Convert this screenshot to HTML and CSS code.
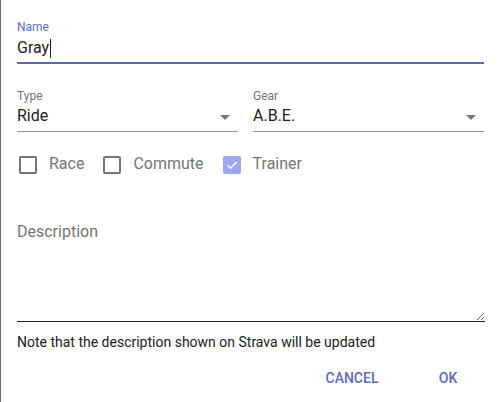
FILE: index.html
```html
<!DOCTYPE html>
<html lang="en">
<head>
<meta charset="utf-8">
<title>Edit activity</title>
<link rel="stylesheet" href="styles.css">
</head>
<body>
<div class="dialog">
  <div class="content">
    <div class="field name-field">
      <div class="label label-active">Name</div>
      <div class="input-line"><span class="value">Gray</span><span class="caret"></span></div>
    </div>

    <div class="selects">
      <div class="field select-field">
        <div class="label">Type</div>
        <div class="select-line">
          <span class="value">Ride</span>
          <svg class="arrow" width="10" height="5" viewBox="0 0 10 5"><path d="M0 0l5 5 5-5z"/></svg>
        </div>
      </div>
      <div class="field select-field">
        <div class="label">Gear</div>
        <div class="select-line">
          <span class="value">A.B.E.</span>
          <svg class="arrow" width="10" height="5" viewBox="0 0 10 5"><path d="M0 0l5 5 5-5z"/></svg>
        </div>
      </div>
    </div>

    <div class="checks">
      <label class="check"><span class="box"></span><span class="check-label">Race</span></label>
      <label class="check"><span class="box"></span><span class="check-label">Commute</span></label>
      <label class="check"><span class="box box-on"><svg width="14" height="14" viewBox="0 0 24 24"><path d="M4.5 12.5l5 5L20 7" fill="none" stroke="#fff" stroke-width="2.6"/></svg></span><span class="check-label">Trainer</span></label>
    </div>

    <textarea class="description" placeholder="Description"></textarea>

    <p class="note">Note that the description shown on Strava will be updated</p>
  </div>
  <div class="actions">
    <button class="btn">CANCEL</button>
    <button class="btn">OK</button>
  </div>
</div>
</body>
</html>
```
FILE: styles.css
```css
html, body {
  margin: 0;
  padding: 0;
  background: #fff;
}

body {
  font-family: Roboto, "Liberation Sans", sans-serif;
  color: #212121;
}

.dialog {
  width: 498px;
  height: 402px;
  border-left: 1px solid #6d6a63;
  box-sizing: border-box;
}

.content {
  padding: 20px 14px 0 16px;
}

.label {
  font-size: 12px;
  line-height: 14px;
  color: #757575;
}

.label-active {
  color: #5c6bc0;
}

.input-line {
  margin-top: 4px;
  font-size: 16px;
  line-height: 20px;
  padding-bottom: 4px;
  border-bottom: 2px solid #5a6aae;
  display: flex;
  align-items: center;
}

.caret {
  display: inline-block;
  width: 1px;
  height: 19px;
  background: #212121;
  margin-left: 1px;
}

.selects {
  margin-top: 25px;
  display: grid;
  grid-template-columns: 221px 1fr;
  column-gap: 15px;
}

.select-line {
  margin-top: 3px;
  font-size: 16px;
  line-height: 20px;
  padding-bottom: 5px;
  border-bottom: 1px solid #949494;
  display: flex;
  align-items: center;
  justify-content: space-between;
}

.arrow {
  fill: #757575;
  margin-right: 8px;
  margin-top: 2px;
}

.checks {
  margin-top: 20px;
  display: flex;
  align-items: flex-start;
  padding-left: 2px;
}

.check {
  display: flex;
  align-items: flex-start;
  margin-right: 19px;
}

.box {
  width: 18px;
  height: 18px;
  box-sizing: border-box;
  border: 2px solid #757575;
  border-radius: 2px;
  margin-top: 4px;
  display: flex;
  align-items: center;
  justify-content: center;
}

.box-on {
  border: none;
  background: #9ba8f2;
}

.check-label {
  margin-left: 12px;
  padding-top: 2px;
  font-size: 16px;
  line-height: 20px;
  color: #757575;
}

.description {
  display: block;
  margin-top: 48px;
  width: 468px;
  height: 99px;
  box-sizing: content-box;
  padding: 0;
  border: none;
  border-bottom: 1px solid #222;
  outline: none;
  font-family: Roboto, "Liberation Sans", sans-serif;
  font-size: 16px;
  line-height: 20px;
  color: #212121;
  background: transparent;
}

.description::placeholder {
  color: #757575;
}

.note {
  margin: 12px 0 0;
  font-size: 14px;
  line-height: 16px;
  color: #212121;
}

.actions {
  display: flex;
  justify-content: flex-end;
  gap: 8px;
  padding: 10px 6px 0 0;
}

.btn {
  min-width: 88px;
  height: 36px;
  padding: 0 16px;
  border: none;
  background: transparent;
  font-family: Roboto, "Liberation Sans", sans-serif;
  font-size: 14px;
  font-weight: 500;
  line-height: 36px;
  color: #5c6bc0;
  letter-spacing: 0;
}
```
